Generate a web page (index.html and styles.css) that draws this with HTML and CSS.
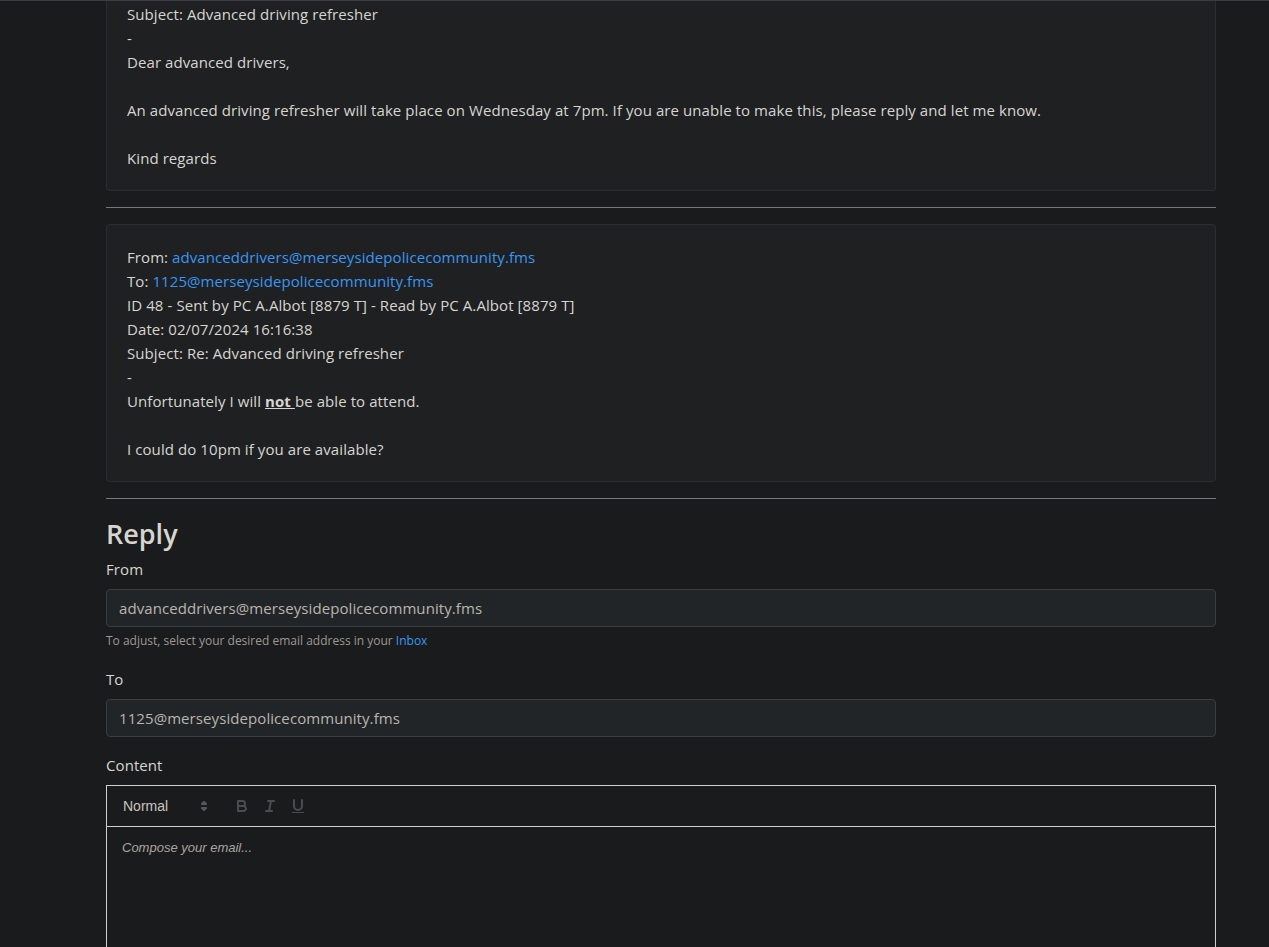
FILE: index.html
```html
<!DOCTYPE html>
<html lang="en">
<head>
<meta charset="utf-8">
<title>Message</title>
<link rel="stylesheet" href="styles.css">
</head>
<body>
<div class="topline"></div>
<main class="container">
  <section class="card card-first">
    <div class="card-body">
      Subject: Advanced driving refresher<br>
      -<br>
      Dear advanced drivers,<br>
      <br>
      An advanced driving refresher will take place on Wednesday at 7pm. If you are unable to make this, please reply and let me know.<br>
      <br>
      Kind regards
    </div>
  </section>
  <hr class="sep">
  <section class="card">
    <div class="card-body">
      From: <a href="#">advanceddrivers@merseysidepolicecommunity.fms</a><br>
      To: <a href="#">1125@merseysidepolicecommunity.fms</a><br>
      ID 48 - Sent by PC A.Albot [8879 T] - Read by PC A.Albot [8879 T]<br>
      Date: 02/07/2024 16:16:38<br>
      Subject: Re: Advanced driving refresher<br>
      -<br>
      Unfortunately I will <u><b>not </b></u>be able to attend.<br>
      <br>
      I could do 10pm if you are available?
    </div>
  </section>
  <hr class="sep">
  <h3 class="title">Reply</h3>
  <div class="form-group">
    <label class="label">From</label>
    <div class="input">advanceddrivers@merseysidepolicecommunity.fms</div>
    <small class="help">To adjust, select your desired email address in your <a href="#">Inbox</a></small>
  </div>
  <div class="form-group">
    <label class="label">To</label>
    <div class="input">1125@merseysidepolicecommunity.fms</div>
  </div>
  <div class="form-group">
    <label class="label">Content</label>
    <div class="editor">
      <div class="toolbar">
        <span class="picker">
          <span class="picker-label">Normal</span>
          <svg class="picker-arrow" viewBox="0 0 18 18"><polygon points="7 11 9 13 11 11 7 11"/><polygon points="7 7 9 5 11 7 7 7"/></svg>
        </span>
        <span class="formats">
          <span class="tbtn"><svg viewBox="0 0 18 18"><path d="M5,4H9.5A2.5,2.5,0,0,1,12,6.5v0A2.5,2.5,0,0,1,9.5,9H5A0,0,0,0,1,5,9V4A0,0,0,0,1,5,4Z"/><path d="M5,9h5.5A2.5,2.5,0,0,1,13,11.5v0A2.5,2.5,0,0,1,10.5,14H5a0,0,0,0,1,0,0V9A0,0,0,0,1,5,9Z"/></svg></span>
          <span class="tbtn"><svg viewBox="0 0 18 18"><line x1="7" x2="13" y1="4" y2="4"/><line x1="5" x2="11" y1="14" y2="14"/><line x1="8" x2="10" y1="14" y2="4"/></svg></span>
          <span class="tbtn"><svg viewBox="0 0 18 18"><path d="M5,3V9a4.012,4.012,0,0,0,4,4H9a4.012,4.012,0,0,0,4-4V3"/><rect class="fill" height="1" rx="0.5" ry="0.5" width="12" x="3" y="15"/></svg></span>
        </span>
      </div>
      <div class="editor-body"><span class="placeholder">Compose your email...</span></div>
    </div>
  </div>
</main>
</body>
</html>
```
FILE: styles.css
```css
html, body {
  margin: 0;
  padding: 0;
  background: #1a1b1d;
}
body {
  font-family: "Open Sans", "Noto Sans", sans-serif;
  font-size: 15px;
  line-height: 24px;
  letter-spacing: 0.08px;
  color: #d8d5d0;
  overflow: hidden;
  height: 947px;
}
a {
  color: #3a96f3;
  text-decoration: none;
}
.topline {
  position: fixed;
  top: 0;
  left: 0;
  right: 0;
  height: 1px;
  background: #3a3d40;
  z-index: 5;
}
.container {
  width: 1110px;
  margin-left: 106px;
}
.card {
  background: #1e2022;
  border: 1px solid #2b2e30;
  border-radius: 4px;
}
.card-first {
  border-top: 0;
  border-top-left-radius: 0;
  border-top-right-radius: 0;
}
.card-first .card-body {
  padding-top: 2px;
}
.card-body {
  padding: 20px;
}
.card-body b {
  font-weight: 700;
}
.sep {
  margin: 16px 0;
  border: 0;
  border-top: 1px solid #75787a;
  height: 0;
}
.title {
  margin: 0 0 8px;
  font-size: 27px;
  line-height: 34px;
  font-weight: 600;
  letter-spacing: 0;
  color: #d8d5d0;
  padding-top: 2px;
  height: 32px;
}
.form-group {
  margin-bottom: 16px;
}
.label {
  display: block;
  margin-bottom: 8px;
}
.input {
  height: 38px;
  box-sizing: border-box;
  padding: 6px 12px;
  line-height: 24px;
  background: #222527;
  border: 1px solid #3a3e41;
  border-radius: 4px;
  color: #b9b5ae;
}
.help {
  display: block;
  margin-top: 4px;
  font-size: 12px;
  line-height: 20px;
  letter-spacing: 0;
  color: #9d9992;
}
.editor {
  border: 1px solid #cfcfcf;
  font-family: "Liberation Sans", Arial, sans-serif;
  letter-spacing: 0;
}
.toolbar {
  display: flex;
  align-items: center;
  padding: 8px;
  border-bottom: 1px solid #cfcfcf;
  height: 24px;
}
.picker {
  display: flex;
  align-items: center;
  justify-content: space-between;
  width: 98px;
  height: 24px;
  margin-right: 15px;
  padding-left: 8px;
  box-sizing: border-box;
  font-size: 14px;
  font-weight: 500;
  color: #c9c5bf;
}
.picker-arrow {
  width: 18px;
  height: 18px;
  fill: none;
  stroke: #55595c;
  stroke-width: 2;
  stroke-linejoin: round;
}
.formats {
  display: flex;
}
.tbtn {
  display: flex;
  width: 28px;
  height: 24px;
  padding: 3px 5px;
  box-sizing: border-box;
}
.tbtn svg {
  width: 18px;
  height: 18px;
  fill: none;
  stroke: #4a4d50;
  stroke-width: 2;
  stroke-linecap: round;
  stroke-linejoin: round;
}
.tbtn svg .fill {
  fill: #4a4d50;
  stroke: none;
}
.editor-body {
  min-height: 200px;
  padding: 12px 15px;
  font-size: 13px;
  line-height: 18px;
}
.placeholder {
  font-style: italic;
  color: #aaa69f;
}
```
